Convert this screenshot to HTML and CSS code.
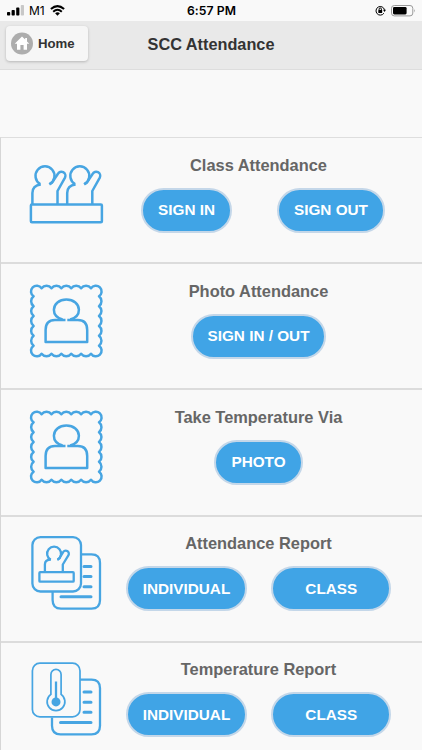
FILE: index.html
```html
<!DOCTYPE html>
<html lang="en">
<head>
    <meta charset="UTF-8">
    <meta name="viewport" content="width=device-width, initial-scale=1.0">
    <title>SCC Attendance</title>
    <link rel="stylesheet" href="styles.css">
</head>
<body>
    <div class="status-bar">
        <div class="status-left">
            <svg class="signal" width="18" height="11" viewBox="0 0 18 11">
                <rect x="0" y="7" width="3.2" height="3.6" rx="0.8"/>
                <rect x="4.6" y="5" width="3.2" height="5.6" rx="0.8"/>
                <rect x="9.2" y="2.6" width="3.2" height="8" rx="0.8"/>
                <rect class="signal-off" x="13.8" y="0" width="3.2" height="10.6" rx="0.8"/>
            </svg>
            <span class="carrier">M1</span>
            <svg class="wifi" width="15" height="11" viewBox="0 0 15 11">
                <path d="M0.9 4.1 Q7.5 -1.9 14.1 4.1"/>
                <path d="M3.2 6.7 Q7.5 2.9 11.8 6.7"/>
                <path class="wifi-dot" d="M5.1 8.3 Q7.5 6.3 9.9 8.3 L7.5 10.8 Z"/>
            </svg>
        </div>
        <div class="status-time">6:57 PM</div>
        <div class="status-right">
            <svg width="11" height="11" viewBox="0 0 11 11">
                <path class="lock-ring" d="M8.9 8.2 A4.3 4.3 0 1 1 9.5 4.8"/>
                <path d="M8 4.7 H11 L9.5 7 Z"/>
                <rect x="3.3" y="4.9" width="3.9" height="3" rx="0.4"/>
                <path class="lock-ring" d="M4.1 5 V4.1 A1.15 1.15 0 0 1 6.4 4.1 V5"/>
            </svg>
            <svg width="25" height="12" viewBox="0 0 25 12">
                <rect class="battery-case" x="0.5" y="0.5" width="21.3" height="10.4" rx="2.8"/>
                <rect x="2" y="2" width="13.6" height="7.4" rx="1.3"/>
                <path class="battery-tip" d="M23 3.9 Q24.6 5.7 23 7.5 Z"/>
            </svg>
        </div>
    </div>

    <div class="header">
        <a class="home-btn" href="#">
            <svg width="22" height="23" viewBox="0 0 22 22">
                <circle cx="11" cy="11" r="11"/>
                <path class="house" d="M11 4 L3.7 11.2 H6 V17.3 H9.4 V12.6 H12.6 V17.3 H16 V11.2 H18.3 L16 8.9 V5.4 H14.2 V7.1 Z"/>
            </svg>
            <span>Home</span>
        </a>
        <h1>SCC Attendance</h1>
    </div>

    <!-- shapes used by more than one row -->
    <svg class="defs" width="0" height="0">
        <defs>
            <g id="pupil">
                <path d="M12.2 27 A9.5 9.5 0 1 1 21.8 27"/>
                <path d="M4.4 47 V36 Q4.4 28.2 12.8 27.4"/>
                <path d="M21.3 27.4 L24.2 25.4 L29.8 17 A4 4 0 0 1 37 20.6 L29.5 34 V47"/>
            </g>
            <g id="portrait">
                <path d="M13.6 5.2 a6.2 6.2 0 0 1 9.88 0 a6.2 6.2 0 0 1 9.88 0 a6.2 6.2 0 0 1 9.88 0 a6.2 6.2 0 0 1 9.88 0 a6.2 6.2 0 0 1 9.88 0 A5.8 5.8 0 1 1 71 13.3 a6.2 6.2 0 0 1 0 9.88 a6.2 6.2 0 0 1 0 9.88 a6.2 6.2 0 0 1 0 9.88 a6.2 6.2 0 0 1 0 9.88 a6.2 6.2 0 0 1 0 9.88 A5.8 5.8 0 1 1 63 70.8 a6.2 6.2 0 0 1 -9.88 0 a6.2 6.2 0 0 1 -9.88 0 a6.2 6.2 0 0 1 -9.88 0 a6.2 6.2 0 0 1 -9.88 0 a6.2 6.2 0 0 1 -9.88 0 A5.8 5.8 0 1 1 5.6 62.7 a6.2 6.2 0 0 1 0 -9.88 a6.2 6.2 0 0 1 0 -9.88 a6.2 6.2 0 0 1 0 -9.88 a6.2 6.2 0 0 1 0 -9.88 a6.2 6.2 0 0 1 0 -9.88 A5.8 5.8 0 1 1 13.6 5.2 Z"/>
                <path d="M37.5 37 H27 C20.5 37 17.6 40.5 17.6 47 V59 H59.2 V47 C59.2 40.5 56.3 37 49.8 37 H39.3"/>
                <path d="M34.6 36.4 C29.2 35.1 25.9 31.4 25.9 26.8 C25.9 21 31.2 16.6 38.4 16.6 S50.9 21 50.9 26.8 C50.9 31.4 47.6 35.1 42.2 36.4"/>
            </g>
        </defs>
    </svg>

    <div class="menu">
        <div class="row">
            <svg class="icon" viewBox="0 0 78 78">
                <use href="#pupil"/>
                <use href="#pupil" x="34.8"/>
                <rect x="2.9" y="47.4" width="71" height="17.8" rx="1"/>
            </svg>
            <div class="content">
                <h3>Class Attendance</h3>
                <div class="buttons wide-gap">
                    <button>SIGN IN</button>
                    <button>SIGN OUT</button>
                </div>
            </div>
        </div>
        <div class="row">
            <svg class="icon" viewBox="0 0 78 78"><use href="#portrait"/></svg>
            <div class="content">
                <h3>Photo Attendance</h3>
                <div class="buttons">
                    <button>SIGN IN / OUT</button>
                </div>
            </div>
        </div>
        <div class="row">
            <svg class="icon" viewBox="0 0 78 78"><use href="#portrait"/></svg>
            <div class="content">
                <h3>Take Temperature Via</h3>
                <div class="buttons">
                    <button>PHOTO</button>
                </div>
            </div>
        </div>
        <div class="row">
            <svg class="icon report" viewBox="0 0 78 78">
                <rect x="4.4" y="2.1" width="48.6" height="54.4" rx="8"/>
                <path d="M53 19.4 H63.5 Q72 19.4 72 28 V65 Q72 73.7 63.5 73.7 H33 Q24.6 73.7 24.6 65 V57"/>
                <path class="lines" d="M56 31.4 H63 M56 41.4 H63 M56 51.7 H63 M33 61.8 H63"/>
                <path d="M22.8 24.8 A7 7 0 1 1 29.4 24.8"/>
                <path d="M16.9 37 V29.5 Q16.9 24.7 22.8 24.7"/>
                <path d="M29.4 24.8 Q31.8 23.8 32.8 20.9 L35 17.3 A3 3 0 0 1 40.5 20.2 L34.8 29.5 V37"/>
                <rect x="11.4" y="37.2" width="34.3" height="9.5" rx="0.8"/>
            </svg>
            <div class="content">
                <h3>Attendance Report</h3>
                <div class="buttons">
                    <button>INDIVIDUAL</button>
                    <button class="btn-class">CLASS</button>
                </div>
            </div>
        </div>
        <div class="row">
            <svg class="icon report" viewBox="0 0 78 78">
                <rect class="thin" x="4.4" y="2.2" width="47.6" height="53.7" rx="7.5"/>
                <path d="M52 18.7 H63.5 Q72 18.7 72 27.3 V64.8 Q72 73.4 63.5 73.4 H32.5 Q24 73.4 24 64.8 V56.5"/>
                <path class="lines" d="M56 30.9 H63 M56 41.2 H63 M56 51.2 H63 M32.5 61.6 H63"/>
                <path class="thin" d="M22.9 33.4 V13.4 A5.1 5.1 0 0 1 33.1 13.4 V33.4 A8.9 8.9 0 1 1 22.9 33.4 Z"/>
                <path d="M28 20.5 V40"/>
                <circle class="bulb" cx="28" cy="40.9" r="4.5"/>
            </svg>
            <div class="content">
                <h3>Temperature Report</h3>
                <div class="buttons">
                    <button>INDIVIDUAL</button>
                    <button class="btn-class">CLASS</button>
                </div>
            </div>
        </div>
    </div>
</body>
</html>
```

FILE: styles.css
```css
* {
    box-sizing: border-box;
}
body {
    margin: 0;
    height: 750px;
    overflow: hidden;
    font-family: "Liberation Sans", Arial, sans-serif;
    background-color: #f9f9f9;
    color: #333;
}
.status-bar {
    display: grid;
    grid-template-columns: 1fr auto 1fr;
    align-items: center;
    height: 21px;
    padding: 0 6px 0 7px;
    font-family: Inter, sans-serif;
    color: #000;
}
.status-left,
.status-right {
    display: flex;
    align-items: center;
}
.status-right {
    justify-content: flex-end;
    gap: 5px;
}
.signal-off {
    fill: #c8c8c8;
}
.carrier {
    margin: 0 5px 0 4px;
    font-size: 12px;
}
.wifi path {
    fill: none;
    stroke: #000;
    stroke-width: 2;
}
.wifi .wifi-dot {
    fill: #000;
    stroke: none;
}
.status-time {
    font-size: 12.2px;
    font-weight: 600;
    letter-spacing: 0.1px;
}
.lock-ring {
    fill: none;
    stroke: #000;
    stroke-width: 1;
}
.battery-case {
    fill: none;
    stroke: #999;
}
.battery-tip {
    fill: #999;
}
.header {
    display: grid;
    grid-template-columns: 1fr auto 1fr;
    align-items: start;
    height: 49px;
    padding: 5px 6px 0;
    background-color: #e9e9e9;
    border-bottom: 1px solid #ddd;
}
.header h1 {
    margin: 7px 0 0;
    font-size: 16.3px;
    line-height: 22px;
    white-space: nowrap;
}
.home-btn {
    display: flex;
    justify-self: start;
    align-items: center;
    gap: 5px;
    width: 82px;
    height: 35px;
    padding-left: 5px;
    font-size: 13.2px;
    font-weight: bold;
    color: #333;
    text-decoration: none;
    background-color: #f6f6f6;
    border-radius: 4px;
    box-shadow: 0 1px 3px rgba(0, 0, 0, 0.22);
}
.home-btn circle {
    fill: #adadad;
}
.home-btn .house {
    fill: #fff;
}
.defs {
    position: absolute;
}
.menu {
    margin-top: 67px;
    border-top: 1px solid #dedede;
    border-left: 1px solid #d6d6d6;
}
.row {
    display: flex;
    height: 126.2px;
    padding: 18.5px 0 0 27px;
    border-bottom: 2px solid #dcdcdc;
}
.icon {
    flex: none;
    width: 78px;
    height: 78px;
    fill: none;
    stroke: #47a5e2;
    stroke-width: 2.5;
    stroke-linejoin: round;
}
.report {
    stroke-width: 2.3;
}
.lines {
    stroke-width: 3;
    stroke-linecap: round;
}
.thin {
    stroke-width: 1.7;
}
.bulb {
    fill: #47a5e2;
    stroke: none;
}
.content {
    width: 305px;
}
.content h3 {
    margin: -1px 0 13px;
    font-size: 16.4px;
    line-height: 19px;
    text-align: center;
    color: #666;
}
.buttons {
    display: flex;
    justify-content: center;
    gap: 24px;
}
.wide-gap {
    gap: 45px;
    padding-left: 9px;
}
button {
    height: 45px;
    padding: 0 15px;
    font-family: inherit;
    font-size: 15.3px;
    font-weight: bold;
    color: #fff;
    background-color: #40a4e6;
    border: 2px solid #c4d7e9;
    border-radius: 23px;
}
.btn-class {
    width: 120px;
}
```
